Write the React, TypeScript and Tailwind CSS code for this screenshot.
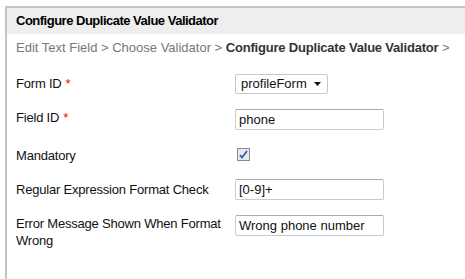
import React from 'react';

const Row = ({ label, required, children, className = '' }: { label: React.ReactNode; required?: boolean; children: React.ReactNode; className?: string }) => (
  <div className={`flex items-start ${className}`}>
    <div className="w-[219px] shrink-0 leading-[17px] tracking-[-0.2px]">
      {label}
      {required && <span className="text-[#ff0000] ml-1">*</span>}
    </div>
    <div>{children}</div>
  </div>
);

const App = () => {
  return (
    <div className="w-[465px] h-[279px] bg-white pt-[6px] pl-[5px] overflow-hidden" style={{ fontFamily: '"Liberation Sans", Arial, sans-serif' }}>
      <div className="border-l-2 border-t-2 border-[#c4c4c4] h-full text-[13px] text-[#111]">
        <div className="bg-[#eeeeee] h-[26px] pl-[9px] flex items-center font-bold text-[13px] tracking-[-0.5px] text-black">
          Configure Duplicate Value Validator
        </div>
        <div className="pl-[9px] pt-[4px] h-[24px] whitespace-nowrap overflow-hidden text-[#777]">
          Edit Text Field &gt; Choose Validator &gt; <span className="font-bold text-[#333] tracking-[-0.2px]">Configure Duplicate Value Validator</span> &gt;
        </div>
        <div className="pl-[9px] pt-[17px] flex flex-col">
          <Row label="Form ID" required>
            <div className="w-[93px] h-[20px] border border-[#c8c8c8] rounded-[2px] flex items-center justify-between pl-[5px] pr-[6px] -mt-[1px]">
              <span>profileForm</span>
              <svg width="7" height="4" viewBox="0 0 7 4"><path d="M0 0h7L3.5 4z" fill="#111" /></svg>
            </div>
          </Row>
          <Row label="Field ID" required className="mt-[15px]">
            <div className="w-[149px] h-[21px] border border-[#c8ccd2] rounded-[2px] flex items-center pl-[3px] border-t-[#aaa]">phone</div>
          </Row>
          <Row label="Mandatory" className="mt-[17px]">
            <div className="ml-[2px] mt-[1px] w-[13px] h-[13px] border border-[#8a8a8a] bg-[#e8e8ec] flex items-center justify-center">
              <svg width="9" height="9" viewBox="0 0 9 9"><path d="M1 5l2 2.5L8 1" stroke="#3a56b8" strokeWidth="1.8" fill="none" /></svg>
            </div>
          </Row>
          <Row label="Regular Expression Format Check" className="mt-[17px]">
            <div className="w-[149px] h-[21px] border border-[#c8ccd2] rounded-[2px] flex items-center pl-[3px] border-t-[#aaa] -mt-[2px]">[0-9]+</div>
          </Row>
          <Row label={<span>Error Message Shown When Format<br />Wrong</span>} className="mt-[15px]">
            <div className="w-[149px] h-[21px] border border-[#c8ccd2] rounded-[2px] flex items-center pl-[3px] border-t-[#aaa]">Wrong phone number</div>
          </Row>
        </div>
      </div>
    </div>
  );
};

export default App;
